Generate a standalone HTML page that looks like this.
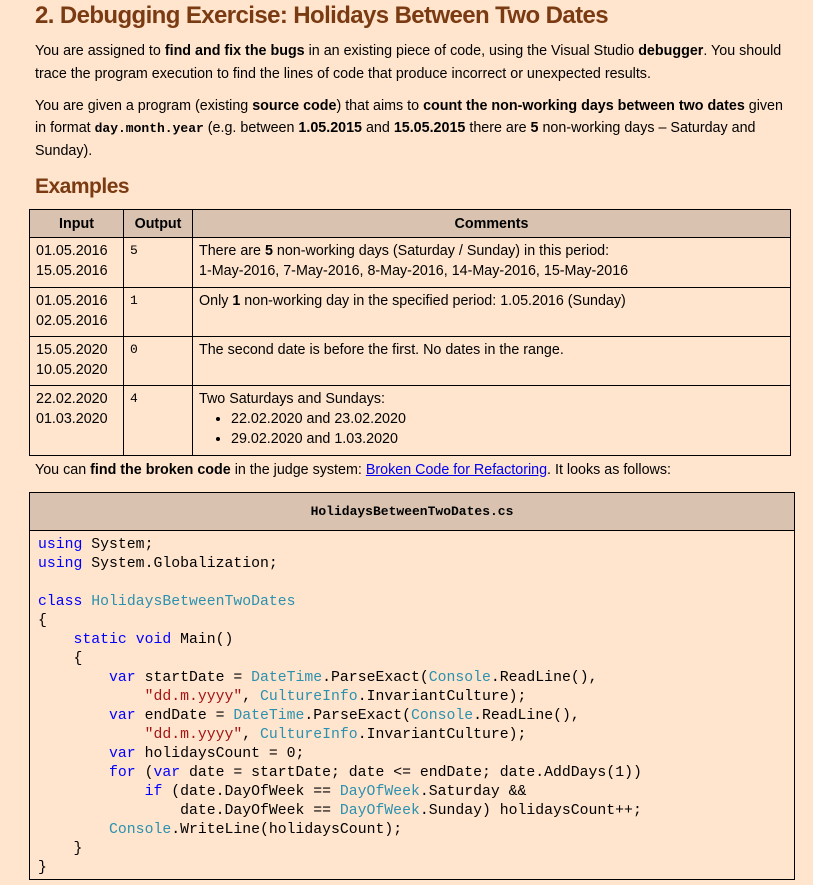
<!DOCTYPE html>
<html><head><meta charset="utf-8"><style>
body{margin:0;width:813px;height:885px;background:#FFE5CE;font-family:"Liberation Sans",sans-serif;color:#000;position:relative;overflow:hidden}
.a{position:absolute;white-space:nowrap}
.t{font-size:14.3px;letter-spacing:0}
h1{position:absolute;margin:0;left:35px;top:2px;font-size:24px;color:#7A3A12;font-weight:bold;letter-spacing:-0.6px;white-space:nowrap}
h2{position:absolute;margin:0;left:35px;top:175px;font-size:21px;color:#7A3A12;font-weight:bold;letter-spacing:-0.5px}
.m{font-family:"Liberation Mono",monospace}
table{position:absolute;left:29px;top:209px;width:762px;border-collapse:collapse;font-size:14.3px;letter-spacing:0}
td,th{border:1px solid #000;vertical-align:top;padding:3px 6px;line-height:20px}
th{background:#D9C3B0;height:21px;vertical-align:middle;text-align:center}
ul{margin:0;padding-left:32px}
.code{position:absolute;left:29px;top:492px;width:766px;height:388px;border:1px solid #000;box-sizing:border-box}
.ch{height:37px;background:#D9C3B0;border-bottom:1px solid #000;text-align:center;line-height:38px;font-weight:bold;font-size:13px}
pre{margin:0;position:absolute;left:8px;top:43px;font-family:"Liberation Mono",monospace;font-size:14.8px;line-height:19px;letter-spacing:0}
.k{color:#0000FF}.ty{color:#2B91AF}.s{color:#A31515}
a{color:#0000EE;text-decoration:underline}
</style></head><body>
<h1>2. Debugging Exercise: Holidays Between Two Dates</h1>
<div class="a t" style="left:35px;top:43px">You are assigned to <b>find and fix the bugs</b> in an existing piece of code, using the Visual Studio <b>debugger</b>. You should</div>
<div class="a t" style="left:35px;top:66px">trace the program execution to find the lines of code that produce incorrect or unexpected results.</div>
<div class="a t" style="left:35px;top:98px">You are given a program (existing <b>source code</b>) that aims to <b>count the non-working days between two dates</b> given</div>
<div class="a t" style="left:35px;top:120px">in format <b class="m" style="font-size:13px">day.month.year</b> (e.g. between <b>1.05.2015</b> and <b>15.05.2015</b> there are <b>5</b> non-working days – Saturday and</div>
<div class="a t" style="left:35px;top:143px">Sunday).</div>
<h2>Examples</h2>
<table>
<tr><th style="width:81px">Input</th><th style="width:56px">Output</th><th>Comments</th></tr>
<tr style="height:50px"><td>01.05.2016<br>15.05.2016</td><td class="m" style="font-size:13px">5</td><td>There are <b>5</b> non-working days (Saturday / Sunday) in this period:<br>1-May-2016, 7-May-2016, 8-May-2016, 14-May-2016, 15-May-2016</td></tr>
<tr style="height:49px"><td>01.05.2016<br>02.05.2016</td><td class="m" style="font-size:13px">1</td><td>Only <b>1</b> non-working day in the specified period: 1.05.2016 (Sunday)</td></tr>
<tr style="height:49px"><td>15.05.2020<br>10.05.2020</td><td class="m" style="font-size:13px">0</td><td>The second date is before the first. No dates in the range.</td></tr>
<tr style="height:70px"><td>22.02.2020<br>01.03.2020</td><td class="m" style="font-size:13px">4</td><td>Two Saturdays and Sundays:<ul><li>22.02.2020 and 23.02.2020</li><li>29.02.2020 and 1.03.2020</li></ul></td></tr>
</table>
<div class="a t" style="left:35px;top:462px">You can <b>find the broken code</b> in the judge system: <a>Broken Code for Refactoring</a>. It looks as follows:</div>
<div class="code"><div class="ch m">HolidaysBetweenTwoDates.cs</div>
<pre><span class="k">using</span> System;
<span class="k">using</span> System.Globalization;

<span class="k">class</span> <span class="ty">HolidaysBetweenTwoDates</span>
{
    <span class="k">static</span> <span class="k">void</span> Main()
    {
        <span class="k">var</span> startDate = <span class="ty">DateTime</span>.ParseExact(<span class="ty">Console</span>.ReadLine(),
            <span class="s">"dd.m.yyyy"</span>, <span class="ty">CultureInfo</span>.InvariantCulture);
        <span class="k">var</span> endDate = <span class="ty">DateTime</span>.ParseExact(<span class="ty">Console</span>.ReadLine(),
            <span class="s">"dd.m.yyyy"</span>, <span class="ty">CultureInfo</span>.InvariantCulture);
        <span class="k">var</span> holidaysCount = 0;
        <span class="k">for</span> (<span class="k">var</span> date = startDate; date &lt;= endDate; date.AddDays(1))
            <span class="k">if</span> (date.DayOfWeek == <span class="ty">DayOfWeek</span>.Saturday &amp;&amp;
                date.DayOfWeek == <span class="ty">DayOfWeek</span>.Sunday) holidaysCount++;
        <span class="ty">Console</span>.WriteLine(holidaysCount);
    }
}</pre></div>
</body></html>
